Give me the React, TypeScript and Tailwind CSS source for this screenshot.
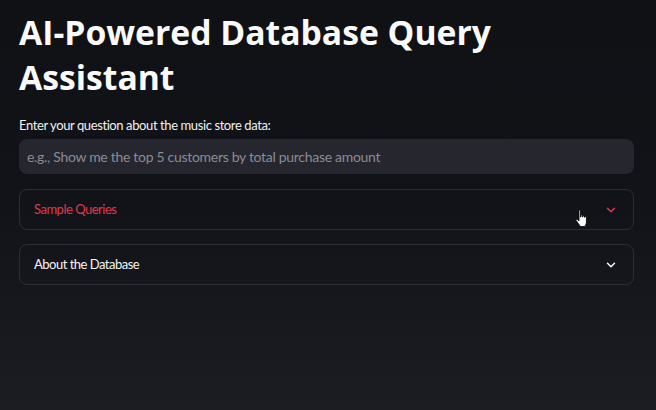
import { ChevronDown } from 'lucide-react';

function Expander({ title, active = false }: { title: string; active?: boolean }) {
  return (
    <div className="relative flex h-[41px] items-center justify-between rounded-lg border border-[#2c2e35] pl-[14px] pr-[15px]">
      <span className={`text-[13px] tracking-[-0.5px] ${active ? 'text-[#e0384f]' : 'text-[#f4f4f5]'}`}>
        {title}
      </span>
      <ChevronDown
        className={`h-[14px] w-[14px] ${active ? 'text-[#e0384f]' : 'text-white'}`}
        strokeWidth={2.5}
      />
    </div>
  );
}

export default function App() {
  return (
    <div
      className="relative h-[410px] w-[656px] overflow-hidden bg-gradient-to-b from-[#101115] via-[#121318] to-[#1b1d22] pl-[19px] pr-[22px] pt-[10px] text-white"
      style={{ fontFamily: '"Lato", "Noto Sans", sans-serif' }}
    >
      <h1
        className="text-[33.7px] font-bold leading-[45px] text-[#fafafa]"
        style={{ fontFamily: '"Open Sans", "Noto Sans", sans-serif' }}
      >
        AI-Powered Database Query
        <br />
        Assistant
      </h1>

      <label className="mt-[16px] block text-[13px] leading-[18px] tracking-[-0.4px] text-[#f0f0f2]">
        Enter your question about the music store data:
      </label>
      <div className="mt-[5px] flex h-[35px] items-center rounded-lg bg-[#25262e] px-[8px]">
        <span className="text-[14px] tracking-[-0.3px] text-[#8b8c93]">
          e.g., Show me the top 5 customers by total purchase amount
        </span>
      </div>

      <div className="mt-[15px] flex flex-col gap-[14px]">
        <Expander title="Sample Queries" active />
        <Expander title="About the Database" />
      </div>

      <svg
        className="absolute left-[575px] top-[209px]"
        width="14"
        height="19"
        viewBox="0 0 14 19"
      >
        <path
          d="M4 1.5c0-.8 1.5-.8 1.5 0V8h.5V6.5c0-.8 1.5-.8 1.5 0V8h.5V7c0-.8 1.5-.8 1.5 0v1.3h.4V8c0-.8 1.5-.8 1.5 0v5c0 2-1 3.5-2 4.5H5.5C4.5 16 2.5 13.5 1.2 11.5c-.5-.8.5-1.6 1.2-1L4 12V1.5z"
          fill="#fff"
          stroke="#000"
          strokeWidth="0.8"
        />
      </svg>
    </div>
  );
}
